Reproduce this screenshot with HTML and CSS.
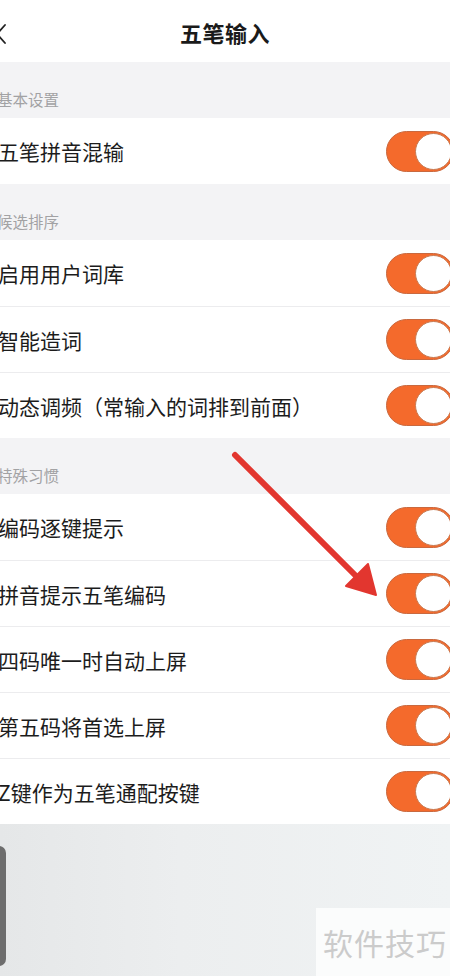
FILE: index.html
```html
<!DOCTYPE html>
<html lang="zh-CN">
<head>
<meta charset="utf-8">
<title>五笔输入</title>
<link rel="stylesheet" href="styles.css">
</head>
<body>
<div class="screen">
  <header class="topbar">
    <svg class="back" width="12" height="22" viewBox="0 0 12 22"><path d="M9 2 L1 11 L9 20" fill="none" stroke="#222" stroke-width="1.8" stroke-linecap="round" stroke-linejoin="round"/></svg>
    <h1 class="title">五笔输入</h1>
  </header>

  <div class="group-title">基本设置</div>
  <ul class="group">
    <li class="row"><span class="label">五笔拼音混输</span><span class="switch"></span></li>
  </ul>

  <div class="group-title">候选排序</div>
  <ul class="group">
    <li class="row"><span class="label">启用用户词库</span><span class="switch"></span></li>
    <li class="row"><span class="label">智能造词</span><span class="switch"></span></li>
    <li class="row"><span class="label">动态调频（常输入的词排到前面）</span><span class="switch"></span></li>
  </ul>

  <div class="group-title">特殊习惯</div>
  <ul class="group">
    <li class="row"><span class="label">编码逐键提示</span><span class="switch"></span></li>
    <li class="row"><span class="label">拼音提示五笔编码</span><span class="switch"></span></li>
    <li class="row"><span class="label">四码唯一时自动上屏</span><span class="switch"></span></li>
    <li class="row"><span class="label">第五码将首选上屏</span><span class="switch"></span></li>
    <li class="row"><span class="label">Z键作为五笔通配按键</span><span class="switch"></span></li>
  </ul>

  <div class="footer-space">
    <div class="side-handle"></div>
    <div class="watermark">软件技巧</div>
  </div>

  <svg class="pointer" width="450" height="976" viewBox="0 0 450 976">
    <line x1="235" y1="455" x2="360" y2="580" stroke="#e2362f" stroke-width="6" stroke-linecap="round"/>
    <polygon points="346,586 368,564 376,595" fill="#e2362f" stroke="#e2362f" stroke-width="2" stroke-linejoin="round"/>
  </svg>
</div>
</body>
</html>
```

FILE: styles.css
```css
html, body {
  margin: 0;
  padding: 0;
  background: #f3f3f5;
  overflow: hidden;
}

body {
  font-family: "Noto Sans CJK SC", "Noto Sans", sans-serif;
  color: #1c1c1c;
}

.screen {
  position: relative;
  width: 450px;
  height: 976px;
  overflow: hidden;
  display: flex;
  flex-direction: column;
}

.topbar {
  height: 62px;
  background: #fff;
  display: flex;
  align-items: center;
  justify-content: center;
  position: relative;
  margin: 0 -3px;
}

.back {
  position: absolute;
  left: -1px;
  top: 23px;
}

.title {
  margin: 0;
  font-size: 22px;
  font-weight: 700;
  color: #1a1a1a;
  letter-spacing: 0.5px;
  line-height: 1;
  padding-top: 2px;
}

.group-title {
  height: 56px;
  box-sizing: border-box;
  padding: 27px 0 0 0;
  margin-left: -3px;
  font-size: 15.5px;
  line-height: 20px;
  color: #a2a2a4;
}

.group {
  list-style: none;
  margin: 0 -3px 0 -3px;
  padding: 0;
  background: #fff;
}

.row {
  height: 66px;
  display: flex;
  align-items: center;
  justify-content: space-between;
  border-top: 1px solid #ececee;
  box-sizing: border-box;
}

.row:first-child {
  border-top: none;
}

.label {
  font-size: 21px;
  color: #1c1c1c;
  padding-left: 1px;
}

.switch {
  position: relative;
  width: 68px;
  height: 41px;
  box-sizing: border-box;
  border-radius: 21px;
  background: #f46a2c;
  border: 1px solid #c9693f;
  margin-right: -1px;
}

.switch::after {
  content: "";
  position: absolute;
  right: 1px;
  top: 1px;
  width: 37px;
  height: 37px;
  box-sizing: border-box;
  border-radius: 50%;
  background: #fff;
  border: 1px solid #c77a52;
}

.footer-space {
  flex: 1;
  position: relative;
  background: linear-gradient(90deg, #e5e7e8 0%, #eceeef 40%, #f0f3f4 100%);
}

.side-handle {
  position: absolute;
  left: -8px;
  top: 22px;
  width: 14px;
  height: 120px;
  border-radius: 8px;
  background: #6d6d6d;
}

.watermark {
  position: absolute;
  right: 0;
  bottom: 0;
  width: 134px;
  height: 68px;
  background: #fbfcfc;
  display: flex;
  align-items: center;
  justify-content: center;
  font-size: 30px;
  color: #cbcbcb;
  letter-spacing: 1px;
  padding-left: 4px;
  box-sizing: border-box;
}

.pointer {
  position: absolute;
  left: 0;
  top: 0;
  pointer-events: none;
}
```
